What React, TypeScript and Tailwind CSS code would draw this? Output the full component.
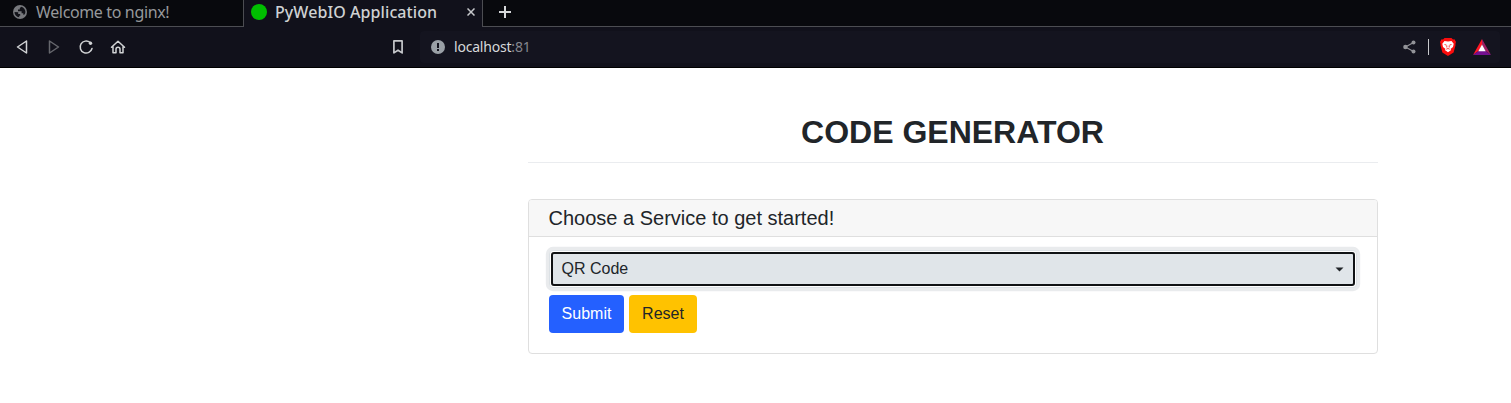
import React from "react";

function GlobeIcon() {
  return (
    <svg width="14" height="14" viewBox="0 0 14 14" className="block shrink-0">
      <circle cx="7" cy="7" r="7" fill="#77797d" />
      <path d="M8.400 1.700L6.800 3v1.500H5v1.700h3.600v2h1.700v1.500h.9c.8-.8 1.200-1.700 1.200-2.700 0-2.400-1.600-4.600-4-5.300zM1.500 7l3.700.3v1.800h2v1.600h-1v1.600C3.400 12 1.500 9.800 1.500 7z" fill="#111218" />
    </svg>
  );
}

function Tabs() {
  return (
    <div className="flex h-[27px] bg-[#08090d] text-[16px] leading-[24px]">
      <div className="flex h-[27px] w-[244px] items-center border-r border-b border-[#4c4d52] pb-[2px] pl-[13px] text-[#96989b]">
        <GlobeIcon />
        <span className="ml-[9px] whitespace-nowrap tracking-[-0.36px]">Welcome to nginx!</span>
      </div>
      <div className="flex h-[27px] w-[238px] items-center bg-[#11111b] pb-[3px] pl-[7px]">
        <span className="size-4 shrink-0 rounded-full bg-[#00bf00]" />
        <span className="ml-2 w-[192px] whitespace-nowrap font-medium tracking-[0.08px] text-[#cfd1d3]">PyWebIO Application</span>
        <svg width="8" height="8" viewBox="0 0 8 8" stroke="#c6c8cb" strokeWidth="1.500">
          <path d="M.5.5l7 7M7.500.5l-7 7" />
        </svg>
      </div>
      <div className="flex h-[27px] flex-1 border-b border-l border-[#4c4d52] pt-[6px] pl-[16px]">
        <svg width="12" height="12" viewBox="0 0 12 12" stroke="#d6d8da" strokeWidth="2">
          <path d="M6 0v12M0 6h12" />
        </svg>
      </div>
    </div>
  );
}

function Toolbar() {
  return (
    <div className="flex h-[41px] border-b border-black bg-[#11111b] pt-[4px]">
      <div className="flex h-[32px] w-[420px] items-center pl-[16px]">
        <svg width="112" height="16" viewBox="0 0 112 16" fill="none" strokeWidth="1.500" strokeLinejoin="round" strokeLinecap="round">
          <path d="M10.500 2v12L1.500 8z" stroke="#d1d3d5" />
          <path d="M33.500 2v12l9-6z" stroke="#66676d" />
          <path d="M76 9.500A6 6 0 1 1 74 3.400" stroke="#d1d3d5" />
          <circle cx="74.500" cy="4.300" r="1.700" fill="#d1d3d5" />
          <path d="M95.500 8.200L102 2.200l6.500 6M97 7.500v6.300h3v-3.500a2 2 0 0 1 4 0v3.500h3V7.500" stroke="#d1d3d5" />
        </svg>
        <svg width="10" height="14" viewBox="0 0 10 14" className="ml-[265px]" fill="none" stroke="#c6c8cb" strokeWidth="1.700" strokeLinejoin="round">
          <path d="M.9.900h8.200v12L5 10.200.9 12.900z" />
        </svg>
      </div>
      <div className="flex h-[32px] w-[1080px] items-center rounded bg-[#14141f] pl-[11px] text-[14px]">
        <svg width="14" height="14" viewBox="0 0 14 14">
          <circle cx="7" cy="7" r="7" fill="#9aa0a6" />
          <path d="M6 3h2v5H6zM6 9h2v2H6z" fill="#14141f" />
        </svg>
        <span className="ml-[9px] w-[949px] pb-[2px] tracking-[-0.2px] text-[#d7d9db]">localhost<span className="text-[#85868d]">:81</span></span>
        <svg width="13" height="14" viewBox="0 0 13 14" stroke="#929398" fill="#929398">
          <path d="M10.500 2.500L2.500 7l8 4.500" fill="none" strokeWidth="1.200" />
          <circle cx="10.500" cy="2.500" r="2" stroke="none" />
          <circle cx="2.400" cy="7" r="2.200" stroke="none" />
          <circle cx="10.500" cy="11.500" r="2" stroke="none" />
        </svg>
        <span className="ml-[12px] h-4 w-px bg-[#c8c9cc]" />
        <svg width="16" height="18" viewBox="0 0 16 18" className="ml-[11px]">
          <path d="M4.500 0h7L13 1.500l1.500-.2L16 4l-.6 2 .2 1-2 7.500L8 18l-5.600-3.500-2-7.500.2-1L0 4l1.500-2.700 1.500.2z" fill="#fb0d0d" />
          <path d="M4.500 3L8 3.500 11.500 3l2.200 2.700-.7 3.300-2.500 2.100.7 1L8 14.200l-3.200-2.100.7-1L3 9l-.7-3.300z" fill="#fff" />
          <path d="M4.500 6.500l2 .6M11.500 6.500l-2 .6M6.800 7.500v2M9.200 7.500v2M6.300 11.200L8 10.500l1.700.7" fill="none" stroke="#fb0d0d" strokeWidth=".8" />
        </svg>
        <svg width="18" height="16" viewBox="0 0 18 16" className="ml-[17px]">
          <path d="M9 0v6L5.500 12 0 16z" fill="#ff1724" />
          <path d="M9 0l9 16-5.500-4L9 6z" fill="#9e1f63" />
          <path d="M0 16l5.500-4h7l5.500 4z" fill="#74108f" />
          <path d="M9 5.500l3.700 6.800H5.300z" fill="#fff" />
        </svg>
      </div>
    </div>
  );
}

export default function App() {
  return (
    <div className="h-[403px] w-[1511px] overflow-hidden bg-white font-['Liberation_Sans',Arial,sans-serif] text-[#212529]">
      <header className="font-['Noto_Sans',sans-serif]">
        <Tabs />
        <Toolbar />
      </header>
      <main className="ml-[528px] w-[850px] pt-[44px]">
        <h1 className="h-[51px] border-b border-[#eaecef] pr-px text-center text-[32px] leading-[40px] font-bold">CODE GENERATOR</h1>
        <section className="mt-[36px] h-[155px] rounded border border-[#dfdfdf] bg-white">
          <h2 className="h-[37px] rounded-t-[3px] border-b border-[#dfdfdf] bg-[#f7f7f7] pl-[19.5px] text-[20px] leading-[36px]">Choose a Service to get started!</h2>
          <div className="px-[20px] pt-[13px]">
            <button className="block h-[38px] w-full rounded border border-[#dce1e5] bg-white p-px text-base shadow-[0_0_0_3.2px_#e9ebed]">
              <span className="flex h-[34px] items-center justify-between rounded-[3px] border-2 border-[#101214] bg-[#e0e5e9] pr-[9px] pl-[8.5px]">
                QR Code
                <svg width="9" height="5" viewBox="0 0 9 5"><path d="M.5.5h8L4.500 4.500z" fill="#212529" /></svg>
              </span>
            </button>
            <div className="mt-[7px] flex gap-[5px] text-base">
              <button className="h-[38px] w-[75px] rounded bg-[#2460ff] text-white">Submit</button>
              <button className="h-[38px] w-[68px] rounded bg-[#ffc200]">Reset</button>
            </div>
          </div>
        </section>
      </main>
    </div>
  );
}
